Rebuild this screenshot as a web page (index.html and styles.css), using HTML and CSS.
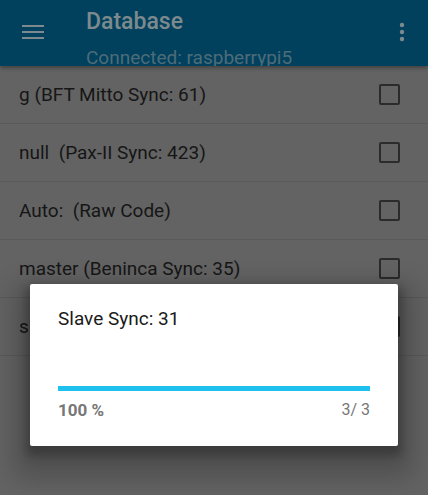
FILE: index.html
```html
<!DOCTYPE html>
<html lang="en">
<head>
    <meta charset="UTF-8">
    <meta name="viewport" content="width=device-width, initial-scale=1.0">
    <title>Database</title>
    <link rel="stylesheet" href="styles.css">
</head>
<body>
    <div class="app">
        <div class="toolbar">
            <div class="menu-icon">
                <svg width="22" height="16" viewBox="0 0 22 16">
                    <rect x="0" y="1" width="22" height="2" fill="#7d8a8d"/>
                    <rect x="0" y="7" width="22" height="2" fill="#7d8a8d"/>
                    <rect x="0" y="13" width="22" height="2" fill="#7d8a8d"/>
                </svg>
            </div>
            <div class="titles">
                <div class="title">Database</div>
                <div class="subtitle">Connected: raspberrypi5</div>
            </div>
            <div class="more-icon">
                <svg width="6" height="20" viewBox="0 0 6 20">
                    <circle cx="3" cy="3" r="2.2" fill="#7d8a8d"/>
                    <circle cx="3" cy="10" r="2.2" fill="#7d8a8d"/>
                    <circle cx="3" cy="17" r="2.2" fill="#7d8a8d"/>
                </svg>
            </div>
        </div>

        <div class="list">
            <div class="list-item"><span>g (BFT Mitto Sync: 61)</span><span class="checkbox"></span></div>
            <div class="list-item"><span>null&nbsp; (Pax-II Sync: 423)</span><span class="checkbox"></span></div>
            <div class="list-item"><span>Auto:&nbsp; (Raw Code)</span><span class="checkbox"></span></div>
            <div class="list-item"><span>master (Beninca Sync: 35)</span><span class="checkbox"></span></div>
            <div class="list-item"><span>slave (Slave Sync: 31)</span><span class="checkbox"></span></div>
        </div>
    </div>

    <div class="dialog">
        <div class="dialog-title">Slave Sync: 31</div>
        <div class="progress"><div class="progress-fill" style="width: 100%"></div></div>
        <div class="progress-info">
            <span class="percent">100 %</span>
            <span class="count">3/ 3</span>
        </div>
    </div>
</body>
</html>
```

FILE: styles.css
```css
/* Page with the dialog scrim already applied */
body {
    font-family: Roboto, "Noto Sans", sans-serif;
    background-color: #636363;
    margin: 0;
    width: 428px;
    height: 495px;
    overflow: hidden;
}

/* Top app bar */
.toolbar {
    height: 66px;
    background-color: #01415e;
    display: flex;
    align-items: flex-start;
    box-shadow: 0 2px 4px rgba(0, 0, 0, 0.35);
    position: relative;
    z-index: 1;
    overflow: hidden;
}

.menu-icon {
    padding: 24px 0 0 22px;
    width: 64px;
}

.titles {
    flex: 1;
    padding-top: 7px;
}

.title {
    font-size: 23px;
    font-weight: 500;
    color: #7d8a8d;
    line-height: 30px;
}

.subtitle {
    font-size: 19px;
    color: #4d6c78;
    margin-top: 9px;
    line-height: 24px;
}

.more-icon {
    padding: 22px 23px 0 0;
}

/* List rows */
.list-item {
    height: 57px;
    border-bottom: 1px solid #5a5a5a;
    display: flex;
    align-items: center;
    justify-content: space-between;
    padding: 0 28px 0 19px;
    font-size: 19px;
    color: #161616;
}

.checkbox {
    width: 17px;
    height: 17px;
    border: 2px solid #2b2b2b;
    border-radius: 2px;
}

/* Progress dialog */
.dialog {
    position: absolute;
    left: 30px;
    top: 284px;
    width: 312px;
    height: 162px;
    padding: 0 28px;
    background-color: #ffffff;
    border-radius: 2px;
    box-shadow: 0 16px 26px 16px rgba(0, 0, 0, 0.2), 0 6px 10px 4px rgba(0, 0, 0, 0.25);
}

.dialog-title {
    font-size: 19px;
    color: #1a1a1a;
    margin-top: 22px;
    line-height: 26px;
}

.progress {
    height: 5px;
    background-color: #c8eefb;
    margin-top: 54px;
}

.progress-fill {
    height: 100%;
    background-color: #1ec1ee;
}

.progress-info {
    display: flex;
    justify-content: space-between;
    margin-top: 9px;
    font-size: 17px;
    color: #777777;
}

.percent {
    font-weight: 700;
}

.count {
    font-size: 16px;
}
```
